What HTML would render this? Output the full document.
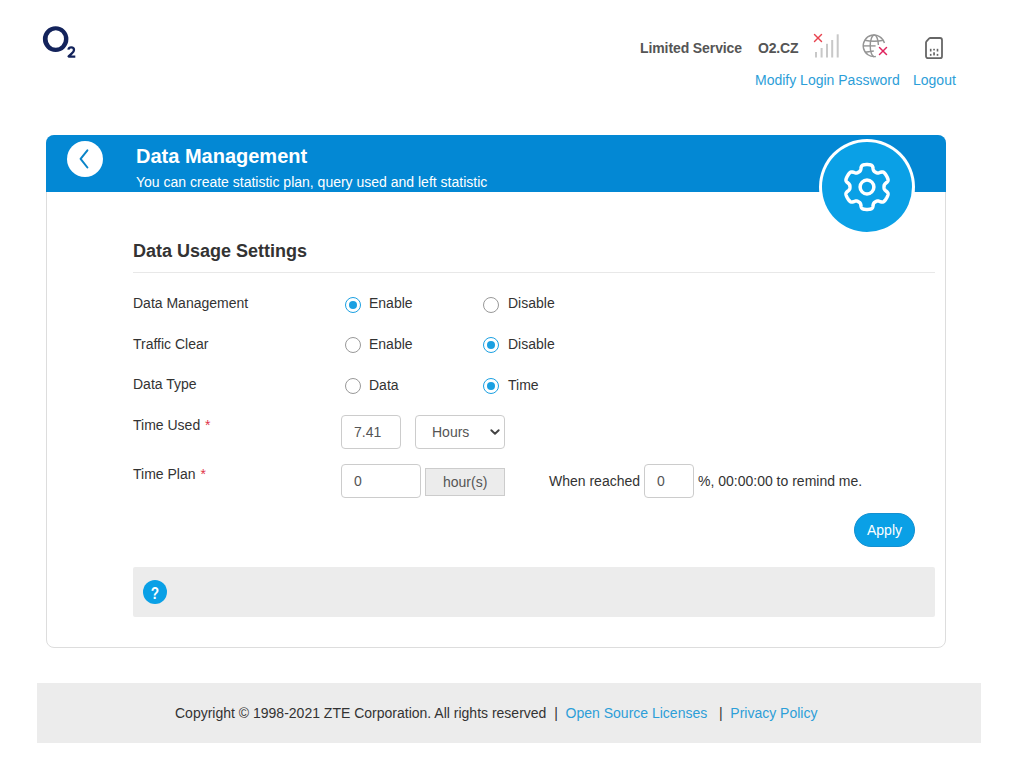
<!DOCTYPE html>
<html><head><meta charset="utf-8">
<style>
*{margin:0;padding:0;box-sizing:border-box}
html,body{width:1024px;height:768px;background:#fff;overflow:hidden}
body{font-family:"Liberation Sans",sans-serif;font-size:14px;color:#333;position:relative}
.a{position:absolute;white-space:nowrap}
.t14{font-size:14px;line-height:16px}
.lnk{color:#2c9ed8}
.card{position:absolute;left:46px;top:135px;width:900px;height:513px;border:1px solid #ddd;border-radius:8px;background:#fff}
.hdr{position:absolute;left:46px;top:135px;width:900px;height:57px;background:#0388d4;border-radius:8px 8px 0 0}
.radio{position:absolute;width:16px;height:16px;border-radius:50%;border:1px solid #999;background:#fff}
.radio.on{border-color:#1ba0e2}
.radio.on::after{content:"";position:absolute;left:3px;top:3px;width:8px;height:8px;border-radius:50%;background:#1ba0e2}
.inp{position:absolute;border:1px solid #ccc;border-radius:4px;background:#fff}
</style></head><body>

<!-- logo -->
<svg class="a" style="left:40px;top:22px" width="40" height="40" viewBox="0 0 40 40">
  <path fill-rule="evenodd" fill="#13235b" d="M15.65 4.2 A12.75 12.85 0 1 1 15.65 29.9 A12.75 12.85 0 1 1 15.65 4.2 Z M15.8 8.2 A8.2 8.8 0 1 0 15.8 25.8 A8.2 8.8 0 1 0 15.8 8.2 Z"/>
  <path d="M28.4 27.6 C28.7 26 29.8 25.4 31.2 25.4 C33 25.4 34 26.4 34 27.9 C34 29.4 33.1 30.4 31.6 31.7 L28.6 34.3 V34.65 H35.3" fill="none" stroke="#13235b" stroke-width="2.3" stroke-linejoin="bevel"/>
</svg>

<!-- header right -->
<div class="a t14" style="left:640px;top:40px;font-weight:bold;color:#555;letter-spacing:-0.1px">Limited Service</div>
<div class="a t14" style="left:758px;top:40px;font-weight:bold;color:#555;letter-spacing:-0.2px">O2.CZ</div>
<svg class="a" style="left:810px;top:30px" width="32" height="30" viewBox="0 0 32 30">
  <g stroke="#e8434f" stroke-width="1.4" stroke-linecap="round"><line x1="4.5" y1="4.5" x2="11.5" y2="11.5"/><line x1="11.5" y1="4.5" x2="4.5" y2="11.5"/></g>
  <g fill="#c8c8c8"><rect x="5" y="22" width="2" height="5.5"/><rect x="10.6" y="18" width="2" height="9.5"/><rect x="16" y="13.8" width="2" height="13.7"/><rect x="21.2" y="10" width="2" height="17.5"/><rect x="26.7" y="4.3" width="2" height="23.2"/></g>
</svg>
<svg class="a" style="left:860px;top:32px" width="30" height="28" viewBox="0 0 30 28">
  <g fill="none" stroke="#959595" stroke-width="1.4">
    <path d="M24.43 11 A10.8 10.8 0 1 0 15.88 24.44"/>
    <path d="M14.3 3 A4.1 10.8 0 0 0 14.3 24.6"/>
    <path d="M14.3 3 A4.1 10.8 0 0 1 18.4 13"/>
    <path d="M4.6 8.2 Q14 10.2 23.5 8.2"/>
    <line x1="3.2" y1="13.9" x2="15.6" y2="13.9"/>
    <path d="M5 20.2 Q9.5 19.6 13.8 19"/>
  </g>
  <g stroke="#e0245e" stroke-width="1.5" stroke-linecap="round"><line x1="19.5" y1="15.5" x2="26.5" y2="22.5"/><line x1="26.5" y1="15.5" x2="19.5" y2="22.5"/></g>
</svg>
<svg class="a" style="left:922px;top:34px" width="24" height="28" viewBox="0 0 24 28">
  <path d="M8.3 4 H18 A2 2 0 0 1 20 6 V22.2 A2 2 0 0 1 18 24.2 H6 A2 2 0 0 1 4 22.2 V8.6 A2 2 0 0 1 4.5 7.3 L7.2 4.4 A2 2 0 0 1 8.3 4 Z" fill="none" stroke="#666" stroke-width="1.8" stroke-linejoin="round"/>
  <g fill="#666"><rect x="7.9" y="14.8" width="1.6" height="2.7"/><rect x="7.9" y="19.9" width="1.6" height="1.9"/>
  <rect x="11.2" y="14.8" width="1.7" height="1.6"/><rect x="11.2" y="18.3" width="1.7" height="3.1"/>
  <rect x="14.7" y="14.8" width="1.6" height="2.7"/><rect x="14.7" y="19.9" width="1.6" height="1.9"/></g>
</svg>
<div class="a t14 lnk" style="left:755px;top:72px">Modify Login Password</div>
<div class="a t14 lnk" style="left:913px;top:72px">Logout</div>

<!-- card -->
<div class="card"></div>
<div class="hdr"></div>
<div class="a" style="left:67px;top:141px;width:36px;height:36px;border-radius:50%;background:#fff"></div>
<svg class="a" style="left:67px;top:141px" width="36" height="36" viewBox="0 0 36 36"><path d="M20.4 9.3 L13.6 17.9 L20.4 26.5" fill="none" stroke="#0a84c8" stroke-width="2" stroke-linecap="round" stroke-linejoin="round"/></svg>
<div class="a" style="left:136px;top:145px;font-size:20px;line-height:23px;font-weight:bold;color:#fff">Data Management</div>
<div class="a t14" style="left:136px;top:174px;color:#fff">You can create statistic plan, query used and left statistic</div>

<!-- gear circle -->
<div class="a" style="left:819px;top:139px;width:96px;height:96px;border-radius:50%;background:#fff"></div>
<div class="a" style="left:822px;top:142px;width:90px;height:90px;border-radius:50%;background:#0aa0e6"></div>
<svg class="a" style="left:823px;top:143px" width="88" height="88" viewBox="-44 -44 88 88"><path d="M17.06 0.00 L17.06 0.30 L17.07 0.60 L17.09 0.90 L17.12 1.20 L17.17 1.50 L17.24 1.81 L17.36 2.13 L17.54 2.47 L17.80 2.82 L18.16 3.20 L18.63 3.62 L19.16 4.07 L19.72 4.55 L20.21 5.04 L20.60 5.52 L20.86 5.98 L21.00 6.42 L21.05 6.84 L21.03 7.24 L20.97 7.63 L20.88 8.01 L20.76 8.39 L20.63 8.76 L20.48 9.12 L20.33 9.48 L20.16 9.83 L19.99 10.19 L19.81 10.54 L19.63 10.88 L19.44 11.22 L19.24 11.56 L19.03 11.89 L18.82 12.22 L18.60 12.55 L18.37 12.87 L18.14 13.18 L17.90 13.49 L17.64 13.79 L17.38 14.07 L17.10 14.35 L16.79 14.60 L16.45 14.81 L16.06 14.98 L15.61 15.07 L15.08 15.08 L14.47 14.99 L13.80 14.80 L13.11 14.56 L12.45 14.32 L11.86 14.13 L11.34 14.01 L10.90 13.96 L10.53 13.97 L10.19 14.03 L9.88 14.11 L9.60 14.23 L9.32 14.35 L9.05 14.49 L8.79 14.63 L8.53 14.77 L8.27 14.93 L8.02 15.08 L7.77 15.25 L7.52 15.42 L7.28 15.62 L7.05 15.84 L6.83 16.10 L6.64 16.42 L6.46 16.83 L6.31 17.33 L6.18 17.94 L6.05 18.63 L5.92 19.35 L5.74 20.03 L5.52 20.60 L5.25 21.06 L4.94 21.40 L4.60 21.65 L4.24 21.84 L3.88 21.98 L3.50 22.09 L3.12 22.17 L2.73 22.24 L2.34 22.30 L1.95 22.34 L1.56 22.38 L1.17 22.41 L0.78 22.43 L0.39 22.44 L0.00 22.44 L-0.39 22.44 L-0.78 22.43 L-1.17 22.41 L-1.56 22.38 L-1.95 22.34 L-2.34 22.30 L-2.73 22.24 L-3.12 22.17 L-3.50 22.09 L-3.88 21.98 L-4.24 21.84 L-4.60 21.65 L-4.94 21.40 L-5.25 21.06 L-5.52 20.60 L-5.74 20.03 L-5.92 19.35 L-6.05 18.63 L-6.18 17.94 L-6.31 17.33 L-6.46 16.83 L-6.64 16.42 L-6.83 16.10 L-7.05 15.84 L-7.28 15.62 L-7.52 15.42 L-7.77 15.25 L-8.02 15.08 L-8.27 14.93 L-8.53 14.77 L-8.79 14.63 L-9.05 14.49 L-9.32 14.35 L-9.60 14.23 L-9.88 14.11 L-10.19 14.03 L-10.53 13.97 L-10.90 13.96 L-11.34 14.01 L-11.86 14.13 L-12.45 14.32 L-13.11 14.56 L-13.80 14.80 L-14.47 14.99 L-15.08 15.08 L-15.61 15.07 L-16.06 14.98 L-16.45 14.81 L-16.79 14.60 L-17.10 14.35 L-17.38 14.07 L-17.64 13.79 L-17.90 13.49 L-18.14 13.18 L-18.37 12.87 L-18.60 12.55 L-18.82 12.22 L-19.03 11.89 L-19.24 11.56 L-19.44 11.22 L-19.63 10.88 L-19.81 10.54 L-19.99 10.19 L-20.16 9.83 L-20.33 9.48 L-20.48 9.12 L-20.63 8.76 L-20.76 8.39 L-20.88 8.01 L-20.97 7.63 L-21.03 7.24 L-21.05 6.84 L-21.00 6.42 L-20.86 5.98 L-20.60 5.52 L-20.21 5.04 L-19.72 4.55 L-19.16 4.07 L-18.63 3.62 L-18.16 3.20 L-17.80 2.82 L-17.54 2.47 L-17.36 2.13 L-17.24 1.81 L-17.17 1.50 L-17.12 1.20 L-17.09 0.90 L-17.07 0.60 L-17.06 0.30 L-17.06 0.00 L-17.06 -0.30 L-17.07 -0.60 L-17.09 -0.90 L-17.12 -1.20 L-17.17 -1.50 L-17.24 -1.81 L-17.36 -2.13 L-17.54 -2.47 L-17.80 -2.82 L-18.16 -3.20 L-18.63 -3.62 L-19.16 -4.07 L-19.72 -4.55 L-20.21 -5.04 L-20.60 -5.52 L-20.86 -5.98 L-21.00 -6.42 L-21.05 -6.84 L-21.03 -7.24 L-20.97 -7.63 L-20.88 -8.01 L-20.76 -8.39 L-20.63 -8.76 L-20.48 -9.12 L-20.33 -9.48 L-20.16 -9.83 L-19.99 -10.19 L-19.81 -10.54 L-19.63 -10.88 L-19.44 -11.22 L-19.24 -11.56 L-19.03 -11.89 L-18.82 -12.22 L-18.60 -12.55 L-18.37 -12.87 L-18.14 -13.18 L-17.90 -13.49 L-17.64 -13.79 L-17.38 -14.07 L-17.10 -14.35 L-16.79 -14.60 L-16.45 -14.81 L-16.06 -14.98 L-15.61 -15.07 L-15.08 -15.08 L-14.47 -14.99 L-13.80 -14.80 L-13.11 -14.56 L-12.45 -14.32 L-11.86 -14.13 L-11.34 -14.01 L-10.90 -13.96 L-10.53 -13.97 L-10.19 -14.03 L-9.88 -14.11 L-9.60 -14.23 L-9.32 -14.35 L-9.05 -14.49 L-8.79 -14.63 L-8.53 -14.77 L-8.27 -14.93 L-8.02 -15.08 L-7.77 -15.25 L-7.52 -15.42 L-7.28 -15.62 L-7.05 -15.84 L-6.83 -16.10 L-6.64 -16.42 L-6.46 -16.83 L-6.31 -17.33 L-6.18 -17.94 L-6.05 -18.63 L-5.92 -19.35 L-5.74 -20.03 L-5.52 -20.60 L-5.25 -21.06 L-4.94 -21.40 L-4.60 -21.65 L-4.24 -21.84 L-3.88 -21.98 L-3.50 -22.09 L-3.12 -22.17 L-2.73 -22.24 L-2.34 -22.30 L-1.95 -22.34 L-1.56 -22.38 L-1.17 -22.41 L-0.78 -22.43 L-0.39 -22.44 L-0.00 -22.44 L0.39 -22.44 L0.78 -22.43 L1.17 -22.41 L1.56 -22.38 L1.95 -22.34 L2.34 -22.30 L2.73 -22.24 L3.12 -22.17 L3.50 -22.09 L3.88 -21.98 L4.24 -21.84 L4.60 -21.65 L4.94 -21.40 L5.25 -21.06 L5.52 -20.60 L5.74 -20.03 L5.92 -19.35 L6.05 -18.63 L6.18 -17.94 L6.31 -17.33 L6.46 -16.83 L6.64 -16.42 L6.83 -16.10 L7.05 -15.84 L7.28 -15.62 L7.52 -15.42 L7.77 -15.25 L8.02 -15.08 L8.27 -14.93 L8.53 -14.77 L8.79 -14.63 L9.05 -14.49 L9.32 -14.35 L9.60 -14.23 L9.88 -14.11 L10.19 -14.03 L10.53 -13.97 L10.90 -13.96 L11.34 -14.01 L11.86 -14.13 L12.45 -14.32 L13.11 -14.56 L13.80 -14.80 L14.47 -14.99 L15.08 -15.08 L15.61 -15.07 L16.06 -14.98 L16.45 -14.81 L16.79 -14.60 L17.10 -14.35 L17.38 -14.07 L17.64 -13.79 L17.90 -13.49 L18.14 -13.18 L18.37 -12.87 L18.60 -12.55 L18.82 -12.22 L19.03 -11.89 L19.24 -11.56 L19.44 -11.22 L19.63 -10.88 L19.81 -10.54 L19.99 -10.19 L20.16 -9.83 L20.33 -9.48 L20.48 -9.12 L20.63 -8.76 L20.76 -8.39 L20.88 -8.01 L20.97 -7.63 L21.03 -7.24 L21.05 -6.84 L21.00 -6.42 L20.86 -5.98 L20.60 -5.52 L20.21 -5.04 L19.72 -4.55 L19.16 -4.07 L18.63 -3.62 L18.16 -3.20 L17.80 -2.82 L17.54 -2.47 L17.36 -2.13 L17.24 -1.81 L17.17 -1.50 L17.12 -1.20 L17.09 -0.90 L17.07 -0.60 L17.06 -0.30 Z" fill="none" stroke="#fff" stroke-width="3.5" stroke-linejoin="round"/><circle cx="0" cy="0" r="6.9" fill="none" stroke="#fff" stroke-width="3.5"/></svg>

<div class="a" style="left:133px;top:241px;font-size:18px;line-height:21px;font-weight:bold;color:#333">Data Usage Settings</div>
<div class="a" style="left:133px;top:272px;width:802px;height:1px;background:#e8e8e8"></div>

<div class="a t14" style="left:133px;top:295px">Data Management</div>
<div class="a t14" style="left:133px;top:336px">Traffic Clear</div>
<div class="a t14" style="left:133px;top:376px">Data Type</div>

<div class="radio on" style="left:345px;top:297px"></div><div class="a t14" style="left:369px;top:295px">Enable</div>
<div class="radio" style="left:483px;top:297px"></div><div class="a t14" style="left:508px;top:295px">Disable</div>
<div class="radio" style="left:345px;top:337px"></div><div class="a t14" style="left:369px;top:336px">Enable</div>
<div class="radio on" style="left:483px;top:337px"></div><div class="a t14" style="left:508px;top:336px">Disable</div>
<div class="radio" style="left:345px;top:378px"></div><div class="a t14" style="left:369px;top:377px">Data</div>
<div class="radio on" style="left:483px;top:378px"></div><div class="a t14" style="left:508px;top:377px">Time</div>

<div class="a t14" style="left:133px;top:417px">Time Used <span style="color:#e0334a;padding-left:1px">*</span></div>
<div class="a t14" style="left:133px;top:466px">Time Plan <span style="color:#e0334a;padding-left:1px">*</span></div>

<div class="inp" style="left:341px;top:415px;width:60px;height:34px"></div>
<div class="a t14" style="left:354px;top:424px;color:#555">7.41</div>
<div class="inp" style="left:415px;top:415px;width:90px;height:34px"></div>
<div class="a t14" style="left:432px;top:424px;color:#555">Hours</div>
<svg class="a" style="left:488px;top:426px" width="14" height="12" viewBox="0 0 14 12"><path d="M3.3 4.2 L7 7.8 L10.7 4.2" fill="none" stroke="#444" stroke-width="1.9" stroke-linecap="round" stroke-linejoin="round"/></svg>

<div class="inp" style="left:341px;top:464px;width:80px;height:34px"></div>
<div class="a t14" style="left:354px;top:473px;color:#555">0</div>
<div class="a" style="left:425px;top:468px;width:80px;height:28px;background:#ececec;border:1px solid #ccc"></div>
<div class="a t14" style="left:443px;top:474px;color:#555">hour(s)</div>

<div class="a t14" style="left:549px;top:473px">When reached</div>
<div class="inp" style="left:644px;top:464px;width:50px;height:34px"></div>
<div class="a t14" style="left:657px;top:473px;color:#555">0</div>
<div class="a t14" style="left:698px;top:473px">%, 00:00:00 to remind me.</div>

<div class="a" style="left:854px;top:513px;width:61px;height:34px;border-radius:17px;background:#0aa0e6;border:1px solid #1590d0"></div>
<div class="a t14" style="left:867px;top:522px;color:#fff">Apply</div>

<div class="a" style="left:133px;top:567px;width:802px;height:50px;background:#ececec;border-radius:2px"></div>
<div class="a" style="left:143px;top:580px;width:24px;height:24px;border-radius:50%;background:#0aa0e6;color:#fff;font-weight:bold;font-size:16px;line-height:28px;text-align:center"><span style="display:inline-block;transform:scaleX(0.85)">?</span></div>

<!-- footer -->
<div class="a" style="left:37px;top:683px;width:944px;height:60px;background:#ececec"></div>
<div class="a t14" style="left:175px;top:705px">Copyright © 1998-2021 ZTE Corporation. All rights reserved &nbsp;| &nbsp;<span class="lnk">Open Source Licenses</span> &nbsp;&nbsp;| &nbsp;<span class="lnk">Privacy Policy</span></div>

</body></html>
